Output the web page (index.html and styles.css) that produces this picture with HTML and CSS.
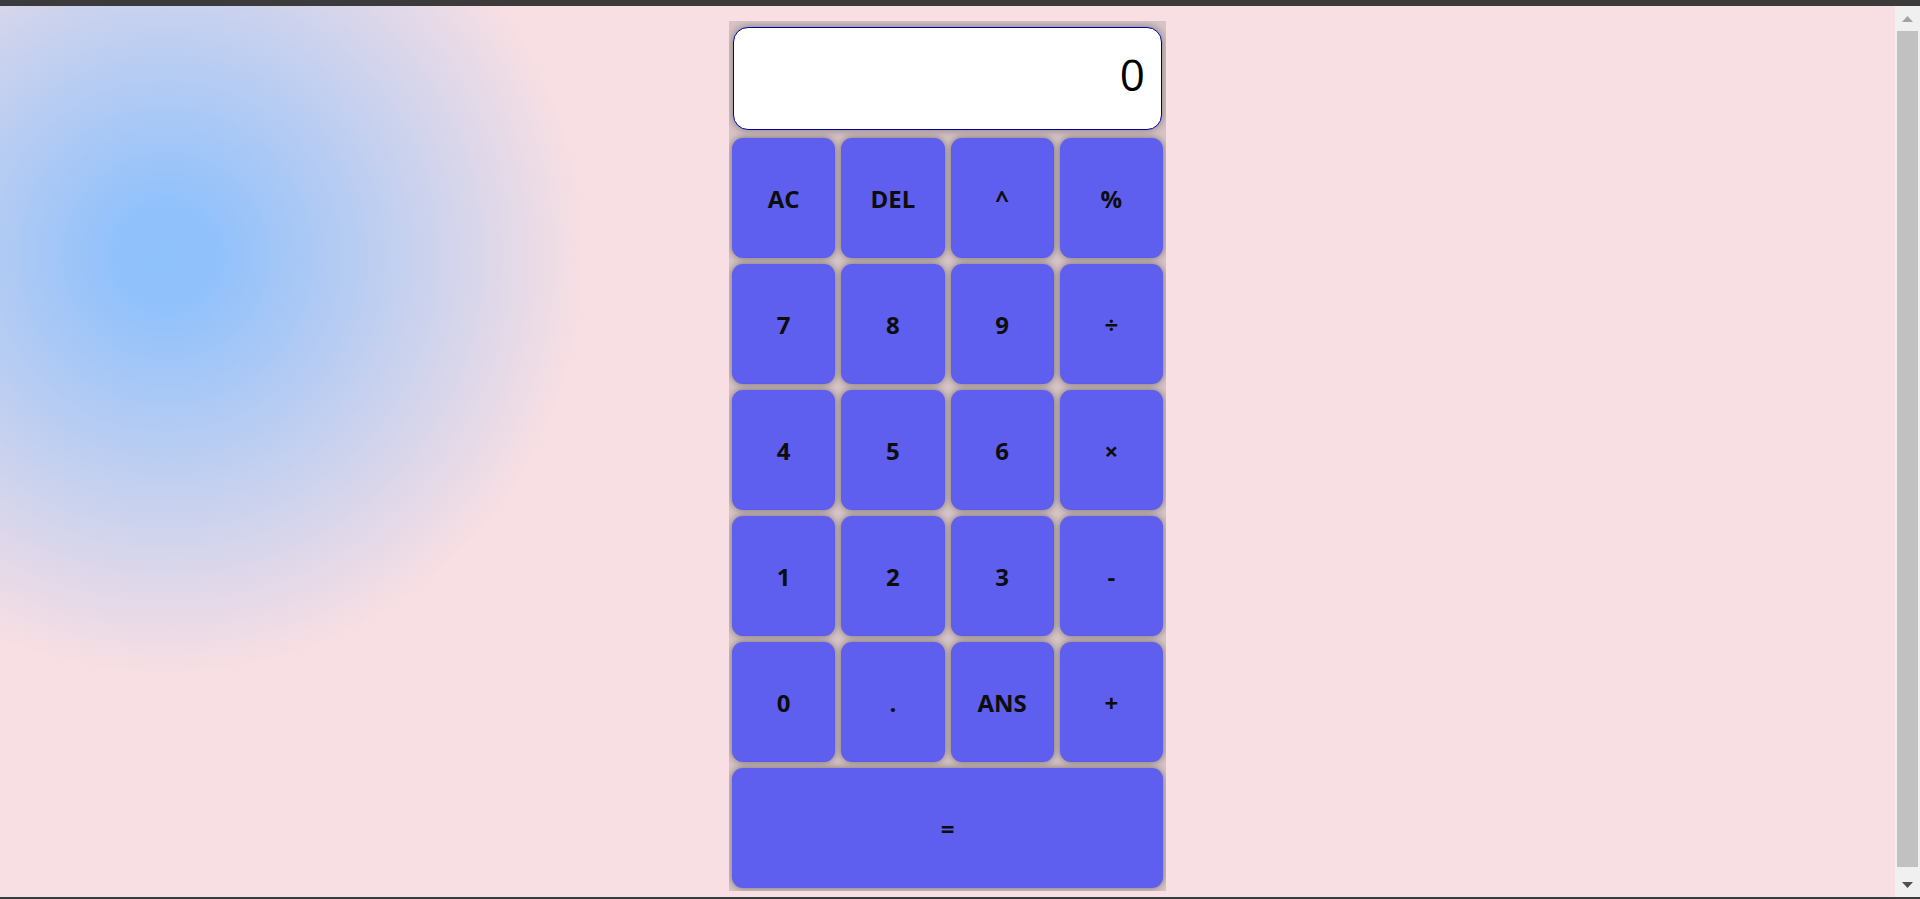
FILE: index.html
```html
<!DOCTYPE html>
<html lang="en">
<head>
<meta charset="utf-8">
<title>Calculator</title>
<link rel="stylesheet" href="styles.css">
</head>
<body>
<div class="viewport">
  <div class="calculator">
    <div class="display">0</div>
    <div class="keys">
      <button class="key">AC</button>
      <button class="key">DEL</button>
      <button class="key">^</button>
      <button class="key">%</button>
      <button class="key">7</button>
      <button class="key">8</button>
      <button class="key">9</button>
      <button class="key">÷</button>
      <button class="key">4</button>
      <button class="key">5</button>
      <button class="key">6</button>
      <button class="key">×</button>
      <button class="key">1</button>
      <button class="key">2</button>
      <button class="key">3</button>
      <button class="key">-</button>
      <button class="key">0</button>
      <button class="key">.</button>
      <button class="key">ANS</button>
      <button class="key">+</button>
      <button class="key key-wide">=</button>
    </div>
  </div>
</div>
<div class="scrollbar" aria-hidden="true">
  <div class="sb-button">
    <svg width="11" height="6" viewBox="0 0 11 6"><path d="M0 6 L5.5 0 L11 6Z" fill="#a3a3a3"/></svg>
  </div>
  <div class="sb-track"><div class="sb-thumb"></div></div>
  <div class="sb-button">
    <svg width="11" height="6" viewBox="0 0 11 6"><path d="M0 0 L5.5 6 L11 0Z" fill="#505050"/></svg>
  </div>
</div>
</body>
</html>
```
FILE: styles.css
```css
html, body {
  margin: 0;
  padding: 0;
}

body {
  height: 100vh;
  box-sizing: border-box;
  border-top: 6px solid #3b3b3b;
  border-bottom: 2px solid #3b3b3b;
  display: flex;
  flex-direction: row;
  overflow: hidden;
  font-family: "Open Sans", "Noto Sans", sans-serif;
  background: #3b3b3b;
}

.viewport {
  flex: 1;
  min-width: 0;
  overflow: hidden;
  background-color: #f7dfe3;
  background-image: radial-gradient(circle 418px at 166px 250px, #8fc1fb 0%, #91c1fb 12%, #f7dfe3 100%);
  background-repeat: no-repeat;
}

.scrollbar {
  width: 25px;
  flex: none;
  background: #f0f0f0;
  display: flex;
  flex-direction: column;
}

.sb-button {
  height: 25px;
  flex: none;
  display: flex;
  align-items: center;
  justify-content: center;
}

.sb-button svg {
  display: block;
}

.sb-track {
  flex: 1;
  padding: 0 2px 5px;
  display: flex;
  flex-direction: column;
}

.sb-thumb {
  flex: 1;
  background: #c1c1c1;
}

.calculator {
  width: 437px;
  box-sizing: border-box;
  margin: 15px auto 11px;
  padding: 3px;
  background: #d6c4c7;
  overflow: hidden;
}

.display {
  height: 103px;
  box-sizing: border-box;
  margin: 3px 1px 0;
  background: #ffffff;
  border: 1px solid #0000a8;
  border-radius: 15px;
  box-shadow: 0 0 8px rgba(0, 0, 0, 0.4);
  display: flex;
  align-items: center;
  justify-content: flex-end;
  padding: 0 16px 10px 0;
  font-size: 44px;
  line-height: 1;
  color: #000;
}

.keys {
  margin-top: 8px;
  display: grid;
  grid-template-columns: repeat(4, 1fr);
  grid-auto-rows: 120px;
  gap: 6px;
}

.key {
  border: none;
  margin: 0;
  padding: 0;
  background: #5e5eef;
  border-radius: 11px;
  box-shadow: 0 0 7px rgba(0, 0, 0, 0.45);
  font-family: "Open Sans", "Noto Sans", sans-serif;
  font-weight: 700;
  font-size: 24px;
  color: #0d0d0d;
  display: flex;
  align-items: center;
  justify-content: center;
}

.key-wide {
  grid-column: span 4;
}
```
